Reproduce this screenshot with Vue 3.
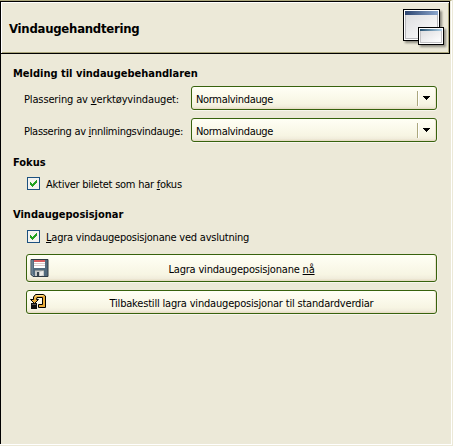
<script setup>
import { ref } from 'vue'

const placements = [
  { id: 'toolbox', before: 'Plassering av ', key: 'v', after: 'erktøyvindauget:', value: 'Normalvindauge' },
  { id: 'dock', before: 'Plassering av ', key: 'i', after: 'nnlimingsvindauge:', value: 'Normalvindauge' },
]
const activate = ref(true)
const save = ref(true)
</script>

<template>
  <main class="panel">
    <header class="header">
      <h1>Vindaugehandtering</h1>
      <svg class="windows" width="46" height="42" viewBox="0 0 46 42">
        <defs>
          <linearGradient id="bar" x1="0" x2="1"><stop offset="0" stop-color="#2c4470" /><stop offset="1" stop-color="#8ba6cd" /></linearGradient>
          <linearGradient id="bar2" x1="0" x2="1"><stop offset="0" stop-color="#24506f" /><stop offset="1" stop-color="#b3d3e9" /></linearGradient>
          <linearGradient id="pane" x1="0" y1="0" x2="1" y2="1"><stop offset="0" stop-color="#dedee0" /><stop offset="1" stop-color="#fff" /></linearGradient>
          <filter id="soft"><feGaussianBlur stdDeviation="1" /></filter>
        </defs>
        <rect x="3" y="4" width="37" height="32" fill="#000" opacity=".4" filter="url(#soft)" />
        <rect x="1.5" y="2.5" width="36" height="31" fill="#fff" stroke="#000" />
        <rect x="3" y="4" width="33" height="28" fill="#b7b7bb" />
        <rect x="4" y="8" width="31" height="23" fill="url(#pane)" />
        <rect x="3" y="4" width="33" height="4" fill="url(#bar)" />
        <rect x="18" y="22" width="26" height="18" fill="#000" opacity=".4" filter="url(#soft)" />
        <rect x="16.5" y="20.500" width="25" height="17" fill="#fff" stroke="#000" />
        <rect x="18" y="22" width="22" height="14" fill="#c2c2c5" />
        <rect x="19" y="24" width="20" height="11" fill="url(#pane)" />
        <rect x="18" y="22" width="22" height="2" fill="url(#bar2)" />
      </svg>
    </header>

    <section class="content">
      <h2 class="melding">Melding til vindaugebehandlaren</h2>
      <div v-for="p in placements" :key="p.id" class="row">
        <span class="label" :class="p.id">{{ p.before }}<u>{{ p.key }}</u>{{ p.after }}</span>
        <button class="box combo">
          <span class="value">{{ p.value }}</span>
          <span class="sep"></span>
          <svg class="arrow" width="7" height="4" viewBox="0 0 7 4" shape-rendering="crispEdges"><path d="M0 0h7v1H0zM1 1h5v1H1zM2 2h3v1H2zM3 3h1v1H3z" /></svg>
        </button>
      </div>

      <h2 class="focus-title">Fokus</h2>
      <label class="check">
        <input v-model="activate" type="checkbox" />
        <svg class="tick" width="13" height="13" viewBox="0 0 13 13" shape-rendering="crispEdges"><rect x=".5" y=".5" width="12" height="12" fill="#f3f3ef" stroke="#1c5180" /><path v-if="activate" d="M3 5h1v3H3zM4 6h1v3H4zM5 7h1v3H5zM6 6h1v3H6zM7 5h1v3H7zM8 4h1v3H8zM9 3h1v3H9z" fill="#21a121" /></svg>
        <span class="text aktiver">Aktiver biletet som har <u>f</u>okus</span>
      </label>

      <h2 class="pos-title">Vindaugeposisjonar</h2>
      <label class="check">
        <input v-model="save" type="checkbox" />
        <svg class="tick" width="13" height="13" viewBox="0 0 13 13" shape-rendering="crispEdges"><rect x=".5" y=".5" width="12" height="12" fill="#f3f3ef" stroke="#1c5180" /><path v-if="save" d="M3 5h1v3H3zM4 6h1v3H4zM5 7h1v3H5zM6 6h1v3H6zM7 5h1v3H7zM8 4h1v3H8zM9 3h1v3H9z" fill="#21a121" /></svg>
        <span class="text"><u>L</u>agra vindaugeposisjonane ved avslutning</span>
      </label>

      <button class="box action save">
        <svg class="icon" width="20" height="20" viewBox="0 0 20 20">
          <path d="M1 1.500h17v17H3L1 16.500z" fill="#526a7d" stroke="#303b45" />
          <path d="M2 2v14l2 2" fill="none" stroke="#8296a6" />
          <path d="M4 2h11v8H4z" fill="#fff" />
          <path d="M4 2h11v2H4z" fill="#d85e60" />
          <path d="M4 5.500h11M4 7.500h11" stroke="#dccaca" />
          <path d="M5 12h9v6H5z" fill="#c7c9c8" />
          <path d="M5 12h9v1H5z" fill="#8f9698" />
          <path d="M7 14h2v4H7z" fill="#38444e" />
          <path d="M10 14l3-1v4l-3 1z" fill="#ededeb" />
        </svg>
        <span class="caption">Lagra vindaugeposisjonane <u>nå</u></span>
      </button>
      <button class="box action reset">
        <svg class="icon" width="20" height="20" viewBox="0 0 20 20">
          <path d="M5.500 2.500H13.500L15.500 4V15.500H8.500V12.500H12.500V5.500H7L6.500 7.500H8.500L4.500 11.500L.5 7.500H3.500V5z" fill="#eaae3c" stroke="#000" stroke-linejoin="round" />
          <path d="M5 5.500L6.500 3.500H13" fill="none" stroke="#ffdf91" />
          <path d="M1 11h6v6H1z" fill="#111" />
          <path d="M2 12.500h4" stroke="#555" />
        </svg>
        <span class="caption">Tilbakestill lagra vindaugeposisjonar til standardverdiar</span>
      </button>
    </section>
  </main>
</template>

<style>
body { margin: 0; background: #ece9d8; }
</style>

<style scoped>
* { box-sizing: border-box; }
.panel {
  width: 452px; height: 445px; background: #ece9d8;
  border-top: 1px solid #aca77d; border-right: 1px solid #fff; border-bottom: 1px solid #fff;
  color: #000; font: 11px/14px "DejaVu Sans Condensed", "DejaVu Sans", sans-serif;
  font-stretch: condensed; white-space: nowrap;
}
.header {
  width: 450px; height: 53px; border: 1px solid #000; padding: 0 1px 0 8px;
  box-shadow: inset 1px 1px #fff, inset -1px -1px #aca77d;
  display: flex; align-items: center; justify-content: space-between;
}
h1 { margin: 2px 0 0; font-size: 13px; line-height: 16px; font-weight: bold; letter-spacing: -0.25px; }
.windows { display: block; margin-top: 1px; }
.content { height: 390px; border-left: 1px solid #000; padding: 13px 14px 0 12px; display: flex; flex-direction: column; }
h2 { margin: 0 0 5px; font-size: 11px; line-height: 14px; font-weight: bold; letter-spacing: 0; }
.row { display: flex; height: 24px; margin-bottom: 8px; padding-left: 11px; align-items: center; justify-content: space-between; }
.label { letter-spacing: -0.3px; padding-top: 4px; }
.toolbox { letter-spacing: -0.14px; }
u { text-decoration: underline; text-underline-offset: 1px; text-decoration-thickness: 1px; text-decoration-skip-ink: none; }
.box {
  font: inherit; letter-spacing: -0.19px; color: #000; border: 1px solid #37620d; border-radius: 3px; padding: 0;
  background: linear-gradient(#fffff5, #f7f5e3 75%, #f1eddc 90%, #e4d9c0);
  box-shadow: inset -1px 0 #ebe2cd, 0 1px #f8f6ed, 1px 0 #f5f2e6;
  display: flex; align-items: center;
}
.combo { width: 246px; height: 24px; }
.value { flex: 1; text-align: left; padding: 4px 0 0 4px; letter-spacing: -0.33px; }
.sep { width: 2px; height: 15px; border-left: 1px solid #aca77d; border-right: 1px solid #fff; margin-right: 4px; }
.arrow { margin-right: 6px; }
.focus-title { margin-top: 6px; margin-bottom: 5px; }
.check { position: relative; display: flex; align-items: center; height: 17px; padding-left: 14px; gap: 6px; letter-spacing: -0.22px; }
.check input { position: absolute; opacity: 0; width: 13px; height: 13px; margin: 0; }
.text { padding-top: 3px; }
.aktiver { letter-spacing: -0.25px; }
.pos-title { margin-top: 16px; margin-bottom: 6px; }
.action { width: 411px; margin-left: 13px; padding-left: 3px; }
.save { height: 28px; margin-top: 9px; }
.reset { height: 24px; margin-top: 8px; }
.icon { flex: none; }
.caption { flex: 1; text-align: center; padding: 3px 3px 0 0; }
</style>
